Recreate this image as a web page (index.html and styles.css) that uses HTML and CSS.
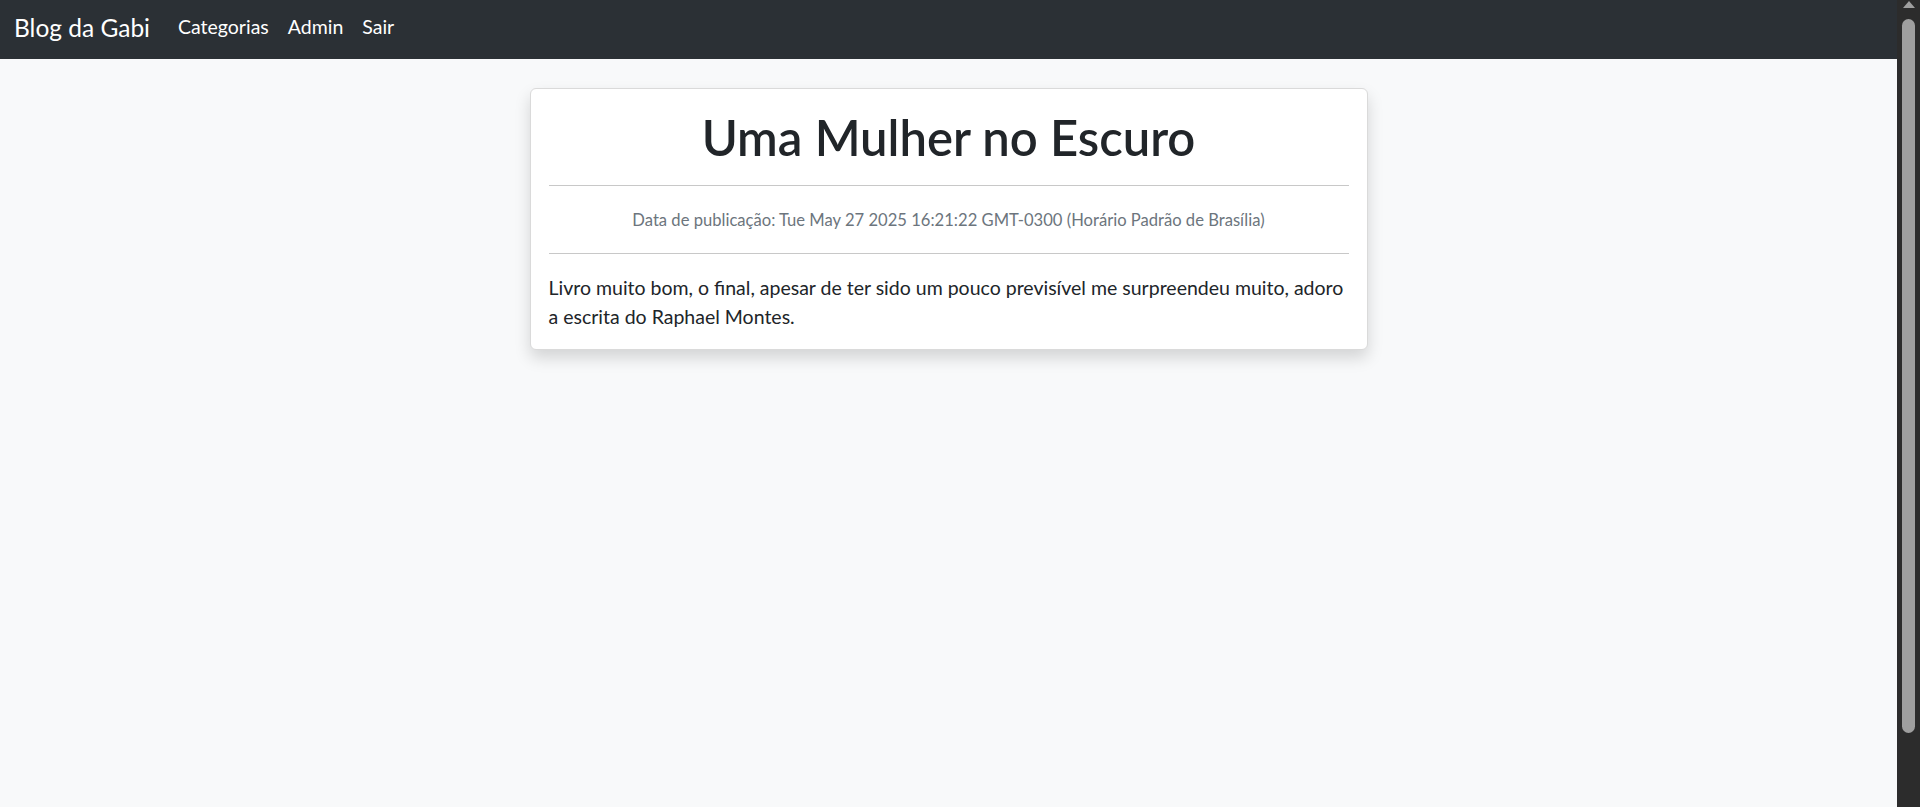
FILE: index.html
```html
<!DOCTYPE html>
<html lang="pt-BR">
<head>
<meta charset="utf-8">
<title>Blog da Gabi</title>
<link rel="stylesheet" href="styles.css">
</head>
<body>
<div class="app">
  <div class="page">
    <nav class="navbar">
      <a class="brand" href="#">Blog da Gabi</a>
      <ul class="nav-links">
        <li><a href="#">Categorias</a></li>
        <li><a href="#">Admin</a></li>
        <li><a href="#">Sair</a></li>
      </ul>
    </nav>
    <main class="main">
      <article class="card">
        <h1 class="title">Uma Mulher no Escuro</h1>
        <hr class="rule rule-top">
        <p class="meta">Data de publicação: Tue May 27 2025 16:21:22 GMT-0300 (Horário Padrão de Brasília)</p>
        <hr class="rule rule-bottom">
        <p class="content">Livro muito bom, o final, apesar de ter sido um pouco previsível me surpreendeu muito, adoro a escrita do Raphael Montes.</p>
      </article>
    </main>
  </div>
  <div class="scrollbar">
    <div class="arrow-up"></div>
    <div class="thumb"></div>
  </div>
</div>
</body>
</html>
```
FILE: styles.css
```css
html, body {
  margin: 0;
  padding: 0;
  height: 100%;
  overflow: hidden;
}
body {
  font-family: "Lato", "Open Sans", sans-serif;
  background: #f8f9fa;
  color: #212529;
}
.app {
  display: flex;
  height: 100vh;
}
.page {
  flex: 1;
  min-width: 0;
}
.navbar {
  height: 59px;
  background: #2b3035;
  display: flex;
  align-items: flex-start;
  padding: 16px 0 0 14px;
  box-sizing: border-box;
}
.brand {
  color: #fff;
  text-decoration: none;
  font-size: 24.5px;
  line-height: 24px;
  margin-right: 28px;
}
.nav-links {
  display: flex;
  list-style: none;
  margin: 1px 0 0;
  padding: 0;
  gap: 19px;
}
.nav-links a {
  color: #fff;
  text-decoration: none;
  font-size: 19.5px;
  line-height: 19px;
}
.main {
  padding-top: 29px;
  display: flex;
  flex-direction: column;
  align-items: center;
}
.card {
  width: 800px;
  padding: 18px;
  background: #fff;
  border: 1px solid #dadada;
  border-radius: 6px;
  box-shadow: 0 8px 16px rgba(0, 0, 0, 0.15);
}
.title {
  margin: 0;
  text-align: center;
  font-size: 49px;
  font-weight: 600;
  line-height: 60px;
}
.rule {
  border: 0;
  border-top: 1px solid #c8c8c8;
  margin: 0;
}
.rule-top {
  margin-top: 18px;
}
.rule-bottom {
  margin-top: 20px;
}
.meta {
  margin: 22px 0 0;
  text-align: center;
  color: #6c757d;
  font-size: 16.6px;
  line-height: 25px;
}
.content {
  margin: 19px 0 0;
  font-size: 19.5px;
  line-height: 29px;
}
.scrollbar {
  width: 23px;
  background: #2c2c2c;
  display: flex;
  flex-direction: column;
  align-items: center;
}
.arrow-up {
  width: 0;
  height: 0;
  border-left: 6px solid transparent;
  border-right: 6px solid transparent;
  border-bottom: 7px solid #9f9f9f;
  margin-top: 1px;
}
.thumb {
  margin-top: 11px;
  width: 13px;
  height: 714px;
  background: #9f9f9f;
  border-radius: 7px;
}
```
